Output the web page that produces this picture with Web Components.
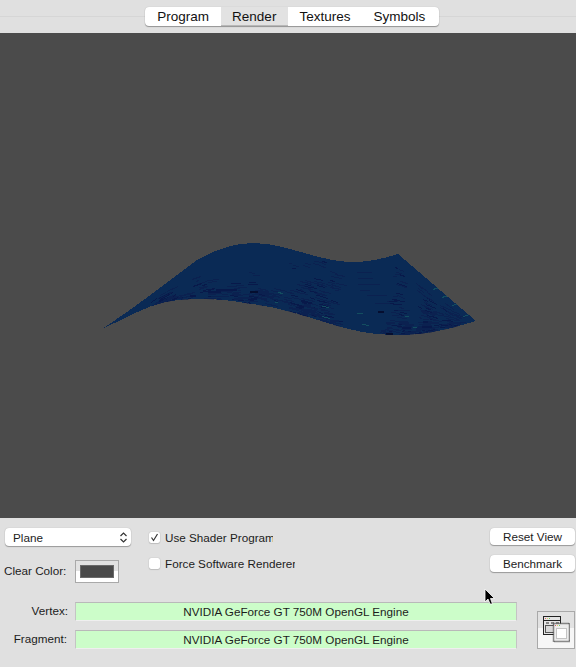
<!DOCTYPE html>
<html><head><meta charset="utf-8"><style>
html,body{margin:0;padding:0;background:#e0e0e0}
body{width:576px;height:667px;overflow:hidden;font:11.7px "Liberation Sans",Arial,sans-serif;color:#1c1c1c}
</style></head><body>
<app-window></app-window>
<template id="tw"><style>
:host{display:flex;flex-direction:column;width:576px;height:667px;position:relative}
.top{height:33px;flex:none;background:linear-gradient(#e0e0e0 0 16px,#d6d6d6 16px 17px,#e0e0e0 17px);display:flex;justify-content:center;padding:7px 0 0 8px;box-sizing:border-box}
</style>
<div class="top"><tab-bar><tab-item>Program</tab-item><tab-item selected>Render</tab-item><tab-item>Textures</tab-item><tab-item>Symbols</tab-item></tab-bar></div>
<gl-view></gl-view>
<control-panel></control-panel>
</template>
<script>
function def(name, html, init){
  customElements.define(name, class extends HTMLElement{
    constructor(){super();const s=this.attachShadow({mode:'open'});s.innerHTML=html; this._s=s;}
    connectedCallback(){ if(init&&!this._d){this._d=1;init(this,this._s);} }
  });
}
def('tab-bar',`<style>:host{display:flex;height:19px;background:#fff;border-radius:4px;box-shadow:0 1px 1px rgba(0,0,0,.33),0 0 1px rgba(0,0,0,.22);overflow:hidden}</style><slot></slot>`);
def('tab-item',`<style>:host{display:block;height:19px;line-height:19px;font-size:13.5px;color:#111;padding:0 11.5px;text-align:center}
:host(:first-child){padding-left:12px}:host(:last-child){padding-right:13.5px}
:host([selected]){background:#e2e2e2;box-shadow:inset 0 -1px 0 #b8b8b8}</style><slot></slot>`);
const SHEET="M102 329C130 311 165 284 197 260C215 250 233 243 254 243C285 243 320 262 352 262C368 262 382 259 398 254L476 321C455 327 430 335 396 335C345 336 305 310 252 304C222 299 195 296 165 302C146 306 124 319 102 329Z";
def('gl-view',`<style>:host{display:block;width:576px;height:485px;background:#4b4b4b;flex:none}svg{display:block}</style>
<svg width="576" height="485" viewBox="0 33 576 485"><defs><clipPath id="c"><path d="${SHEET}"/></clipPath></defs>
<path d="${SHEET}" fill="#0a2a55" shape-rendering="crispEdges"/><g id="m" clip-path="url(#c)" shape-rendering="crispEdges"></g></svg>`,(h,s)=>{
  const g=s.getElementById('m');let o='';let seed=23;const r=()=>(seed=(seed*16807)%2147483647)/2147483647;
  const T=[[102,329],[197,260],[254,243],[303,252],[352,262],[398,254],[476,321]];
  const B=[[102,329],[165,302],[200,298],[252,304],[323,322],[396,335],[476,321]];
  const at=(L,x)=>{for(let i=1;i<L.length;i++){if(x<=L[i][0]){const a=L[i-1],b=L[i];return a[1]+(b[1]-a[1])*(x-a[0])/(b[0]-a[0]);}}return L[L.length-1][1];};
  const seg=(x,y,w,sl,c,sw)=>{o+=`<path d="M${Math.round(x)} ${Math.round(y)}.5L${Math.round(x+w)} ${Math.round(y+sl*w)}.5" stroke="${c}" stroke-width="${sw}" fill="none"/>`;};
  const cols=[296,306,318,330,388,400,412,424,436,448,296,318,400,424];
  for(let i=0;i<150;i++){
    const left=r()<.3;
    const x=left?150+r()*145:cols[Math.floor(r()*cols.length)]+(r()-.5)*12;
    const v=left?.45+.55*r():Math.pow(r(),.6);
    const t=at(T,x),b=at(B,x);
    const y0=t+(b-t)*v;
    const sl=(at(B,x+8)-at(B,x-8))/16*v+(at(T,x+8)-at(T,x-8))/16*(1-v);
    const n=2+Math.floor(r()*4);
    for(let k=0;k<n;k++){
      const w=3+r()*(left?12:9),q=r();
      seg(x+(r()-.5)*7,y0+k*2.4,w,sl,q<.3?'#08194a':'#0b2150',v>.7&&r()<.4?2:1);
    }
  }
  [[357,272,15],[358,278,15],[358,284,22],[367,295,20],[375,303,15],[360,290,10]].forEach(l=>seg(l[0],l[1],l[2],0,'#0b2150',1));
  [[378,311,6],[386,333,7],[250,291,8]].forEach(l=>seg(l[0],l[1],l[2],0,'#050e30',2));
  [[322,306,7,.2],[322,316,8,.2],[362,324,7,.1],[357,313,6,0],[405,316,4,0],[413,327,4,0],[433,289,6,-.4],[442,297,6,-.3],[452,305,7,-.3],[463,316,7,-.3],[278,292,5,.2],[275,302,3,0]].forEach(l=>seg(l[0],l[1],l[2],l[3],'#134e60',1));
  g.innerHTML=o;
});
def('pop-up',`<style>:host{display:flex;align-items:center;justify-content:space-between;width:126px;height:18px;box-sizing:border-box;background:#fff;border-radius:4px;box-shadow:0 1px 1px rgba(0,0,0,.3),0 0 1px rgba(0,0,0,.25);padding:0 3px 0 8px;color:#1c1c1c}svg{display:block}</style><slot></slot><svg width="9" height="13" viewBox="0 0 9 13" fill="none" stroke="#333" stroke-width="1.2"><path d="M1.5 5 4.5 2 7.5 5M1.5 8 4.5 11 7.500 8"/></svg>`);
def('check-box',`<style>:host{display:flex;align-items:center;height:18px;color:#1c1c1c;white-space:nowrap;overflow:hidden}
.b{flex:none;width:11px;height:11px;background:#fff;border-radius:2px;box-shadow:0 0 1px rgba(0,0,0,.35),0 1px 1px rgba(0,0,0,.12);margin:0 5px 0 1px;display:flex}svg{display:block}</style><span class="b"></span><slot></slot>`,(h,s)=>{
  if(h.hasAttribute('checked')) s.querySelector('.b').innerHTML='<svg width="11" height="11" viewBox="0 0 11 11" fill="none" stroke="#333" stroke-width="1.2"><path d="M2.500 5.500 4.500 8.500 8.500 2"/></svg>';
});
def('push-button',`<style>:host{display:block;width:85px;height:17px;line-height:17px;text-align:center;background:#fff;border-radius:4px;box-shadow:0 1px 1px rgba(0,0,0,.3),0 0 1px rgba(0,0,0,.25);color:#1c1c1c}</style><slot></slot>`);
def('color-well',`<style>:host{display:block;width:44px;height:23px;box-sizing:border-box;border:1px solid #a9a9a9;background:linear-gradient(#e2e2e2 0 10px,#fff 10px);padding:4px 4px}i{display:block;height:100%;background:#4a4a4a;box-shadow:inset 0 0 0 1px #6a6a6a}</style><i></i>`);
def('info-field',`<style>:host{display:block;height:19px;line-height:18px;box-sizing:border-box;background:#ccfdc9;border:1px solid;border-color:#b9b9b9 #c4c4c4 #efefef #c4c4c4;text-align:center;color:#1c1c1c}</style><slot></slot>`);
def('swap-button',`<style>:host{display:block;width:38px;height:38px;box-sizing:border-box;border:1px solid #a9a9a9;background:linear-gradient(#e2e2e2 0 16px,#f6f6f6 16px);padding:4px 0 0 5px}svg{display:block}</style>
<svg width="27" height="27" viewBox="0 0 27 27" fill="none"><rect x=".5" y=".5" width="17" height="18" fill="#e4e4e4" stroke="#222"/><path d="M1 4.500H17" stroke="#222"/><path d="M2 2.500h1" stroke="#d66"/><path d="M4 2.500h1" stroke="#dc6"/><path d="M6 2.500h1" stroke="#6c6"/><path d="M3 7h3M8 7h3M13 7h3" stroke="#666" stroke-width="1.500"/><rect x="2.500" y="9.500" width="13" height="7" fill="#d8d8d8" stroke="#555"/><rect x="10.500" y="7.500" width="16" height="18" fill="#ececec"/><path d="M12 9.500h1" stroke="#d66"/><path d="M14 9.500h1" stroke="#dc6"/><path d="M16 9.500h1" stroke="#6c6"/><rect x="10.500" y="7.500" width="16" height="18" stroke="#222" stroke-width="1.500" stroke-dasharray="1 1"/><rect x="13.500" y="12.500" width="10" height="10" fill="#fff" stroke="#c4c4c4"/></svg>`);
def('control-panel',`<style>:host{display:block;position:relative;height:149px;background:#e0e0e0}
.top{display:grid;grid-template-columns:143px 1fr 85px;padding:10px 1px 0 5px;height:66px;box-sizing:border-box}
.left{display:flex;flex-direction:column;gap:14px}
.cc{display:flex;align-items:center;gap:9px;margin-left:-1px;color:#1c1c1c}
.cc span{padding-bottom:2px}
.mid{display:flex;flex-direction:column;gap:8px}
.right{display:flex;flex-direction:column;gap:10px}
.bot{display:grid;grid-template-columns:68px 449px 59px;padding-top:18px}
.lab{display:flex;flex-direction:column;gap:9px;text-align:right;color:#1c1c1c}
.lab span{height:19px;line-height:18px}
.fld{display:flex;flex-direction:column;gap:9px;margin-left:7px}
.sw{margin-top:9px;margin-left:20px}
</style>
<div class="top"><div class="left"><pop-up>Plane</pop-up><div class="cc"><span>Clear Color:</span><color-well></color-well></div></div>
<div class="mid"><check-box checked style="width:125px">Use Shader Program</check-box><check-box style="width:147px">Force Software Renderer</check-box></div>
<div class="right"><push-button>Reset View</push-button><push-button>Benchmark</push-button></div></div>
<div class="bot"><div class="lab"><span>Vertex:</span><span style="padding-right:1px">Fragment:</span></div><div class="fld"><info-field>NVIDIA GeForce GT 750M OpenGL Engine</info-field><info-field>NVIDIA GeForce GT 750M OpenGL Engine</info-field></div><div class="sw"><swap-button></swap-button></div></div>
<mouse-cursor></mouse-cursor>`);
def('mouse-cursor',`<style>:host{position:absolute;left:484px;top:70px;width:12px;height:18px;display:block}svg{display:block}</style><svg width="12" height="18" viewBox="0 0 12 18"><path d="M1 1V14L4 11 6 16H8.500L6.500 10.500H10.500Z" fill="#000" stroke="#fff" stroke-width=".8"/></svg>`);
def('app-window',document.getElementById('tw').innerHTML);
</script>
</body></html>
